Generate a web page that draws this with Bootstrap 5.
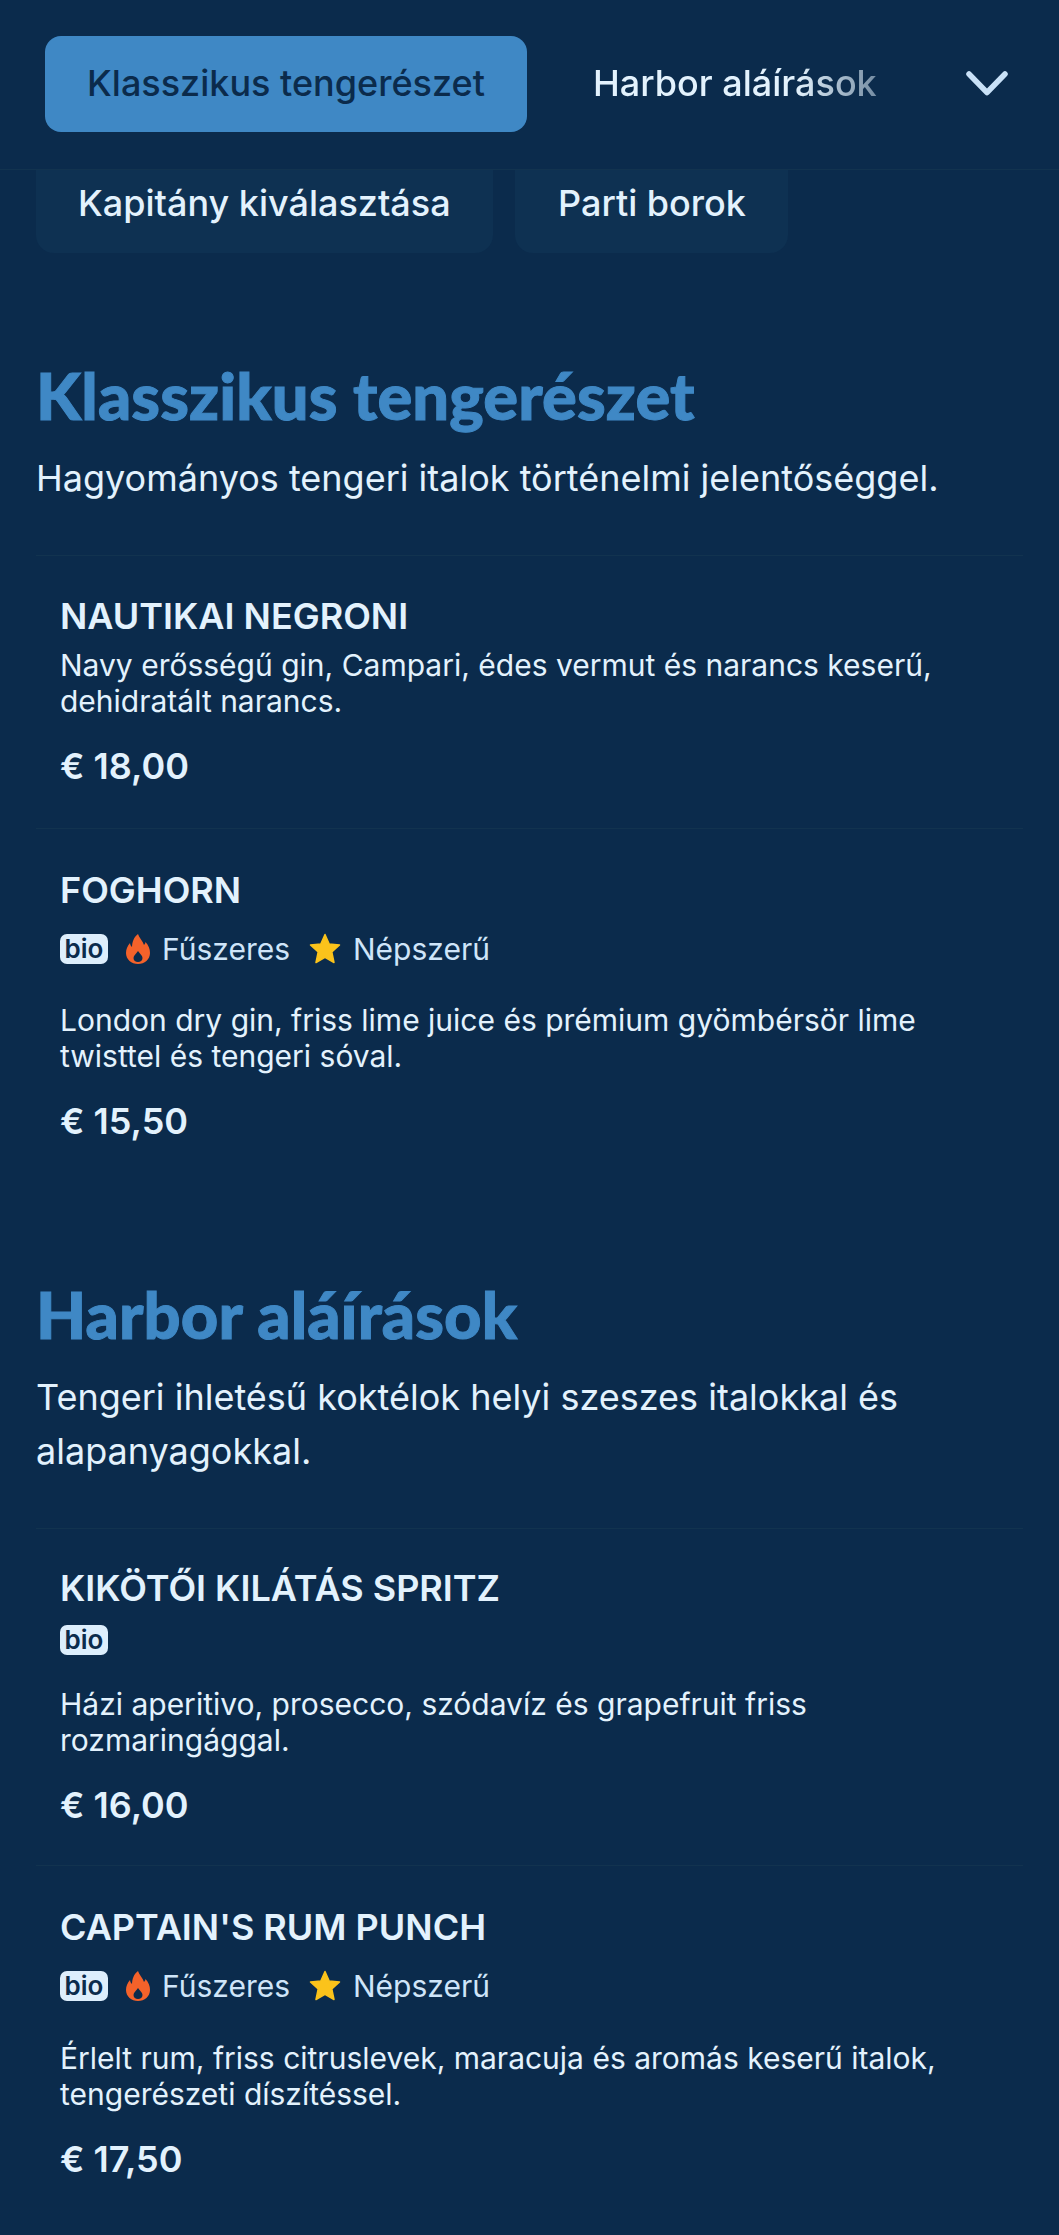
<!DOCTYPE html>
<html lang="hu">
<head>
<meta charset="utf-8">
<title>Menü</title>
<link href="https://cdn.jsdelivr.net/npm/bootstrap@5.3.0/dist/css/bootstrap.min.css" rel="stylesheet">
<style>
html,body{background:#0b2b4c;}
body{font-family:Inter,"Liberation Sans",sans-serif;color:#e3f2fd;width:1059px;height:2235px;overflow:hidden;}
.topbar{position:relative;z-index:2;height:170px;background:#0b2b4c;border-bottom:1px solid #12334f;padding:36px 0 0 45px;}
.tab-on{width:482px;height:96px;background:#3f88c5;border-radius:16px;color:#0b2b4c;font-size:36px;font-weight:500;line-height:94px;text-align:center;}
.tab-off{margin-left:66px;font-size:36px;font-weight:500;line-height:94px;width:290px;white-space:nowrap;overflow:hidden;-webkit-mask-image:linear-gradient(90deg,#000 70%,transparent 125%);mask-image:linear-gradient(90deg,#000 70%,transparent 125%);}
.chev{position:absolute;left:965px;top:69px;}
.chiprow{position:relative;z-index:1;padding:0 36px;margin-top:-20px;gap:22px;}
.chip{height:103px;background:#0e3152;border-radius:18px;font-size:36px;font-weight:500;display:flex;align-items:center;padding:3px 0 0 42px;}
.chip-a{width:457px;}
.chip-b{width:273px;padding-left:43px;}
.sect{padding:0 36px;}
.sect-h{font-family:Lato,sans-serif;font-weight:900;color:#3f88c5;font-size:65px;letter-spacing:.1px;-webkit-text-stroke:1px #3f88c5;line-height:80px;margin:0;}
.sect-d{font-size:36px;line-height:54px;margin:16px 0 0;}
.itemrow{border-top:1px solid #12334f;padding:0 24px;}
.iname{font-size:36px;font-weight:600;line-height:44px;margin:0;}
.idesc{font-size:30px;line-height:36px;margin:0;}
.iprice{font-size:36px;font-weight:600;line-height:44px;margin:25px 0 0;}
.tagline{font-size:30px;line-height:40px;color:#cfe5f9;}
.biotag{background:#ddeefc;color:#0b2b4c;font-size:26px;font-weight:600;line-height:30px;width:48px;text-align:center;border-radius:7px;}
.ico-f{margin:0 12px 0 18px;}
.ico-s{margin:0 12px 0 19px;}
</style>
</head>
<body>
<div class="topbar d-flex align-items-start">
  <div class="tab-on">Klasszikus tengerészet</div>
  <div class="tab-off">Harbor aláírások</div>
  <svg class="chev" width="44" height="30" viewBox="0 0 44 30"><path d="M4 5 L22 23.500 L40 5" fill="none" stroke="#c9e1f7" stroke-width="5.500" stroke-linecap="round" stroke-linejoin="round"/></svg>
</div>
<div class="chiprow d-flex">
  <div class="chip chip-a">Kapitány kiválasztása</div>
  <div class="chip chip-b">Parti borok</div>
</div>
<div class="sect" style="padding-top:102px">
  <h2 class="sect-h">Klasszikus tengerészet</h2>
  <p class="sect-d">Hagyományos tengeri italok történelmi jelentőséggel.</p>
  <div class="itemrow" style="margin-top:50px;padding-top:38px;height:273px">
    <p class="iname">NAUTIKAI NEGRONI</p>
    <p class="idesc" style="margin-top:9px">Navy erősségű gin, Campari, édes vermut és narancs keserű, dehidratált narancs.</p>
    <p class="iprice">€ 18,00</p>
  </div>
  <div class="itemrow" style="padding-top:39px;height:325px">
    <p class="iname">FOGHORN</p>
    <div class="tagline d-flex align-items-center" style="margin-top:17px">
      <span class="biotag">bio</span>
      <svg class="ico-f" width="24" height="30" viewBox="0 0 24 30"><path d="M12 0C13 4 17 7 18 11C19 10 19.500 9 19.500 8C22.500 11 24 15 24 19C24 25.500 18.500 30 12 30C5.500 30 0 25.500 0 19C0 15 1.500 12 4 9C4.200 11 5 12 6 13C6 8 8 3 12 0Z" fill="#f4622a"/><path d="M12 17C14 20 16.500 21.500 16.500 24C16.500 26.500 14.500 28 12 28C9.500 28 7.500 26.500 7.500 24C7.500 21.500 10 20 12 17Z" fill="#0b2b4c"/></svg>
      <span>Fűszeres</span>
      <svg class="ico-s" width="32" height="32" viewBox="0 0 32 32"><path d="M16 1.500L20.200 11L30.500 12L22.800 19L25 29.500L16 24.300L7 29.500L9.200 19L1.500 12L11.800 11Z" fill="#fbc31b" stroke="#fbc31b" stroke-width="1.500" stroke-linejoin="round"/></svg>
      <span>Népszerű</span>
    </div>
    <p class="idesc" style="margin-top:33px">London dry gin, friss lime juice és prémium gyömbérsör lime twisttel és tengeri sóval.</p>
    <p class="iprice">€ 15,50</p>
  </div>
</div>
<div class="sect" style="padding-top:121px">
  <h2 class="sect-h">Harbor aláírások</h2>
  <p class="sect-d">Tengeri ihletésű koktélok helyi szeszes italokkal és alapanyagokkal.</p>
  <div class="itemrow" style="margin-top:50px;padding-top:37px;height:337px">
    <p class="iname">KIKÖTŐI KILÁTÁS SPRITZ</p>
    <div class="tagline d-flex align-items-center" style="margin-top:15px">
      <span class="biotag">bio</span>
    </div>
    <p class="idesc" style="margin-top:31px">Házi aperitivo, prosecco, szódavíz és grapefruit friss rozmaringággal.</p>
    <p class="iprice">€ 16,00</p>
  </div>
  <div class="itemrow" style="padding-top:39px">
    <p class="iname">CAPTAIN'S RUM PUNCH</p>
    <div class="tagline d-flex align-items-center" style="margin-top:17px">
      <span class="biotag">bio</span>
      <svg class="ico-f" width="24" height="30" viewBox="0 0 24 30"><path d="M12 0C13 4 17 7 18 11C19 10 19.500 9 19.500 8C22.500 11 24 15 24 19C24 25.500 18.500 30 12 30C5.500 30 0 25.500 0 19C0 15 1.500 12 4 9C4.200 11 5 12 6 13C6 8 8 3 12 0Z" fill="#f4622a"/><path d="M12 17C14 20 16.500 21.500 16.500 24C16.500 26.500 14.500 28 12 28C9.500 28 7.500 26.500 7.500 24C7.500 21.500 10 20 12 17Z" fill="#0b2b4c"/></svg>
      <span>Fűszeres</span>
      <svg class="ico-s" width="32" height="32" viewBox="0 0 32 32"><path d="M16 1.500L20.200 11L30.500 12L22.800 19L25 29.500L16 24.300L7 29.500L9.200 19L1.500 12L11.800 11Z" fill="#fbc31b" stroke="#fbc31b" stroke-width="1.500" stroke-linejoin="round"/></svg>
      <span>Népszerű</span>
    </div>
    <p class="idesc" style="margin-top:34px">Érlelt rum, friss citruslevek, maracuja és aromás keserű italok, tengerészeti díszítéssel.</p>
    <p class="iprice">€ 17,50</p>
  </div>
</div>
<script src="https://cdn.jsdelivr.net/npm/bootstrap@5.3.0/dist/js/bootstrap.bundle.min.js"></script>
</body>
</html>
